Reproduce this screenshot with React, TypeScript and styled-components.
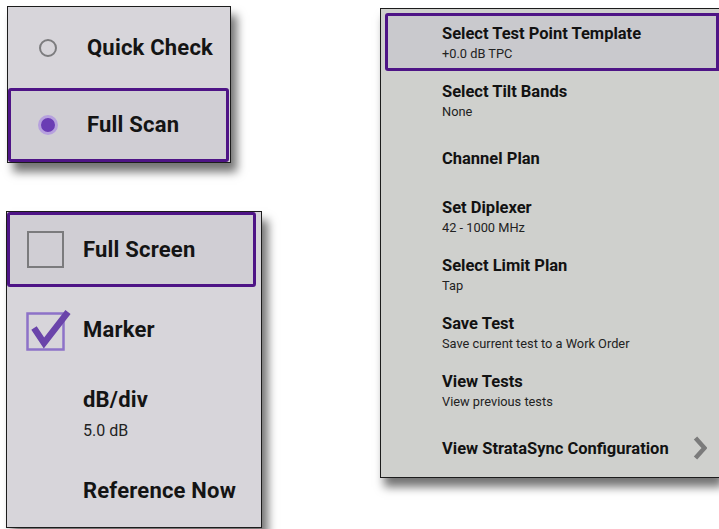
import React from 'react'
import styled, { createGlobalStyle } from 'styled-components'

const GlobalStyle = createGlobalStyle`
  html, body {
    margin: 0;
    padding: 0;
    background: #ffffff;
    overflow: hidden;
  }
  body {
    font-family: Roboto, "Liberation Sans", Arial, sans-serif;
    color: #141414;
  }
`

const PURPLE = '#4e1486'

const Page = styled.div`
  display: flex;
  align-items: flex-start;
  width: 719px;
  height: 529px;
  overflow: hidden;
`

const LeftColumn = styled.div`
  display: flex;
  flex-direction: column;
  gap: 48px;
  padding: 6px 0 0 7px;
`

const Panel = styled.div<{ w: number; h: number; shift?: number }>`
  display: flex;
  flex-direction: column;
  box-sizing: border-box;
  width: ${({ w }) => w}px;
  height: ${({ h }) => h}px;
  margin-left: ${({ shift }) => shift || 0}px;
  background: #d7d5da;
  border: 1.5px solid #1c1c1c;
  box-shadow: 6px 9px 9px rgba(0, 0, 0, 0.55);
`

const OptionRow = styled.div<{ h?: number; selected?: boolean; inset?: number }>`
  display: flex;
  align-items: center;
  box-sizing: border-box;
  height: ${({ h }) => (h ? `${h}px` : 'auto')};
  flex: ${({ h }) => (h ? 'none' : '1')};
  margin-right: ${({ inset }) => inset || 0}px;
  border-radius: 3px;
  background: ${({ selected }) => (selected ? '#d0ced4' : 'transparent')};
  box-shadow: ${({ selected }) => (selected ? `inset 0 0 0 3px ${PURPLE}` : 'none')};
`

const IconSlot = styled.div<{ w: number }>`
  display: flex;
  align-items: center;
  justify-content: center;
  width: ${({ w }) => w}px;
  flex: none;
`

const BigLabel = styled.div`
  display: flex;
  flex-direction: column;
  gap: 10px;
  font-size: 22px;
  font-weight: 700;
  line-height: 24px;
  letter-spacing: 0.2px;
  color: #141414;

  small {
    font-size: 16px;
    font-weight: 400;
    line-height: 18px;
    letter-spacing: 0;
    color: #222;
  }
`

const RadioRing = styled.span<{ on?: boolean }>`
  box-sizing: border-box;
  width: ${({ on }) => (on ? 20 : 18)}px;
  height: ${({ on }) => (on ? 20 : 18)}px;
  border-radius: 50%;
  border: ${({ on }) => (on ? '3px solid #b6a0de' : '2px solid #7c7c7e')};
  background: ${({ on }) => (on ? '#6a3cb4' : 'transparent')};
`

const Box = styled.span`
  box-sizing: border-box;
  width: 37px;
  height: 37px;
  border: 2.5px solid #7b7b7d;
`

const Checked = () => (
  <svg width="46" height="44" viewBox="0 0 46 44" style={{ marginLeft: 8, marginTop: -2 }}>
    <rect x="1.5" y="6.5" width="36" height="36" fill="none" stroke="#8d72c8" strokeWidth="2.5" />
    <path d="M8 21 L18 36 L42 5" fill="none" stroke="#6a44aa" strokeWidth="6.5" strokeLinejoin="miter" />
  </svg>
)

const MenuPanel = styled.div`
  display: flex;
  flex-direction: column;
  box-sizing: border-box;
  width: 360px;
  height: 470px;
  margin: 8px 0 0 118px;
  padding: 4px 0 0 4px;
  background: #cfd0cd;
  border: 1.5px solid #1c1c1c;
  border-right: none;
  box-shadow: 4px 9px 9px rgba(0, 0, 0, 0.55);
`

const MenuRow = styled.div<{ selected?: boolean }>`
  display: flex;
  align-items: center;
  gap: 24px;
  box-sizing: border-box;
  height: 58.5px;
  padding-left: 57px;
  border-radius: 3px 0 0 3px;
  background: ${({ selected }) => (selected ? '#c9c9cd' : 'transparent')};
  box-shadow: ${({ selected }) => (selected ? `inset 0 0 0 3px ${PURPLE}` : 'none')};
`

const MenuText = styled.div`
  display: flex;
  flex-direction: column;
  gap: 3px;
`

const MenuTitle = styled.div`
  font-size: 16.5px;
  font-weight: 700;
  line-height: 19px;
  color: #121212;
`

const MenuSub = styled.div`
  font-size: 12.8px;
  line-height: 15px;
  color: #222;
`

const Chevron = () => (
  <svg width="14" height="24" viewBox="0 0 14 24">
    <path d="M2.5 2 L11.5 12 L2.5 22" fill="none" stroke="#7b7b7b" strokeWidth="4.5" />
  </svg>
)

const menuItems: { title: string; sub?: string; selected?: boolean; more?: boolean }[] = [
  { title: 'Select Test Point Template', sub: '+0.0 dB TPC', selected: true },
  { title: 'Select Tilt Bands', sub: 'None' },
  { title: 'Channel Plan' },
  { title: 'Set Diplexer', sub: '42 - 1000 MHz' },
  { title: 'Select Limit Plan', sub: 'Tap' },
  { title: 'Save Test', sub: 'Save current test to a Work Order' },
  { title: 'View Tests', sub: 'View previous tests' },
  { title: 'View StrataSync Configuration', more: true },
]

export default function App() {
  return (
    <Page>
      <GlobalStyle />
      <LeftColumn>
        <Panel w={224} h={157}>
          <OptionRow h={81}>
            <IconSlot w={79}><RadioRing /></IconSlot>
            <BigLabel>Quick Check</BigLabel>
          </OptionRow>
          <OptionRow selected inset={1}>
            <IconSlot w={79}><RadioRing on /></IconSlot>
            <BigLabel>Full Scan</BigLabel>
          </OptionRow>
        </Panel>

        <Panel w={256} h={317} shift={-1}>
          <OptionRow h={75} selected inset={5}>
            <IconSlot w={76}><Box /></IconSlot>
            <BigLabel>Full Screen</BigLabel>
          </OptionRow>
          <OptionRow h={86}>
            <IconSlot w={76}><Checked /></IconSlot>
            <BigLabel>Marker</BigLabel>
          </OptionRow>
          <OptionRow h={82}>
            <IconSlot w={76} />
            <BigLabel>
              dB/div
              <small>5.0 dB</small>
            </BigLabel>
          </OptionRow>
          <OptionRow>
            <IconSlot w={76} />
            <BigLabel>Reference Now</BigLabel>
          </OptionRow>
        </Panel>
      </LeftColumn>

      <MenuPanel>
        {menuItems.map((item) => (
          <MenuRow key={item.title} selected={item.selected}>
            <MenuText>
              <MenuTitle>{item.title}</MenuTitle>
              {item.sub && <MenuSub>{item.sub}</MenuSub>}
            </MenuText>
            {item.more && <Chevron />}
          </MenuRow>
        ))}
      </MenuPanel>
    </Page>
  )
}
